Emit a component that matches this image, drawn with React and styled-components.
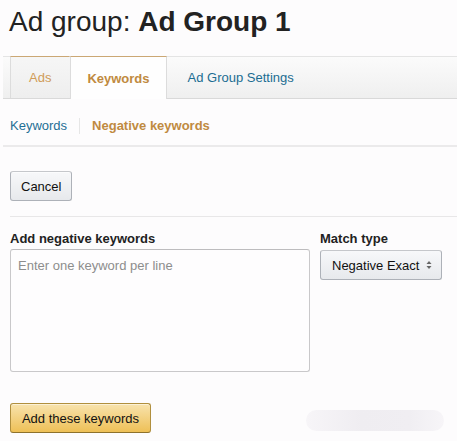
import React from "react";
import styled, { createGlobalStyle } from "styled-components";

const Global = createGlobalStyle`
  html, body { margin: 0; padding: 0; background: #fdfcfd; }
  body { font-family: "Liberation Sans", Arial, sans-serif; color: #111; }
  * { box-sizing: border-box; }
`;

const Page = styled.div`
  width: 457px;
  height: 441px;
  overflow: hidden;
`;

const Title = styled.h1`
  margin: 0;
  padding: 6px 0 0 9px;
  font-size: 28px;
  line-height: 32px;
  font-weight: 400;
  color: #222;
  white-space: nowrap;
  b { font-weight: 700; }
`;

const NavArea = styled.div`
  margin: 18px 0 0 3px;
`;

const TabBar = styled.div`
  display: flex;
  height: 43px;
  padding-left: 7px;
  border-top: 1px solid #e4e4e4;
  border-bottom: 1px solid #d9d9d9;
  background: linear-gradient(#fbfbfb, #efefef);
`;

const Tab = styled.div`
  display: flex;
  align-items: center;
  margin-top: -1px;
  padding: 0 ${(p) => (p.$plain ? "20px" : p.$active ? "16px" : "18px")};
  font-size: 13px;
  white-space: nowrap;
  border-top: 1px solid ${(p) => (p.$plain ? "transparent" : "#cba774")};
  border-left: 1px solid ${(p) => (p.$plain ? "transparent" : "#dcdcdc")};
  color: ${(p) => (p.$active ? "#c08a40" : p.$plain ? "#1b6d92" : "#d09c58")};
  font-weight: ${(p) => (p.$active ? 700 : 400)};
  background: ${(p) =>
    p.$active ? "#fefefe" : p.$plain ? "transparent" : "linear-gradient(#f6f6f6, #eeeeee)"};
  margin-bottom: ${(p) => (p.$active ? "-1px" : "0")};
  border-right: 1px solid ${(p) => (p.$active ? "#dcdcdc" : "transparent")};
`;

const SubNav = styled.div`
  display: flex;
  align-items: center;
  padding: 19px 0 11px 7px;
  border-bottom: 2px solid #ebeaeb;
  font-size: 13px;
  line-height: 16px;
`;

const SubLink = styled.span`
  color: ${(p) => (p.$active ? "#c08a40" : "#1f6f95")};
  font-weight: ${(p) => (p.$active ? 700 : 400)};
  padding: 0 12px;
  border-left: ${(p) => (p.$sep ? "1px solid #e6e6e6" : "none")};
  &:first-child { padding-left: 0; }
`;

const Body = styled.div`
  padding-left: 10px;
`;

const GrayButton = styled.button`
  display: block;
  margin-top: 24px;
  height: 30px;
  padding: 0 10px;
  font: 13px "Liberation Sans", Arial, sans-serif;
  color: #111;
  background: linear-gradient(#f7f8fa, #e7e9ec);
  border: 1px solid #adb1b8;
  border-top-color: #c5c7cb;
  border-radius: 3px;
  box-shadow: 0 1px 0 rgba(255, 255, 255, 0.6) inset;
`;

const Rule = styled.div`
  margin-top: 15px;
  border-top: 1px solid #e8e7e8;
`;

const Form = styled.div`
  display: grid;
  grid-template-columns: 300px 122px;
  column-gap: 10px;
  margin-top: 14px;
`;

const Field = styled.div`
  display: flex;
  flex-direction: column;
`;

const Label = styled.label`
  font-size: 13px;
  line-height: 16px;
  font-weight: 700;
  color: #222;
  margin-bottom: 2px;
`;

const TextArea = styled.textarea`
  width: 300px;
  height: 123px;
  resize: none;
  padding: 8px 7px;
  font: 13px "Liberation Sans", Arial, sans-serif;
  background: #fefdfe;
  border: 1px solid #c9c8ca;
  border-top-color: #bdbcbe;
  border-radius: 3px;
  &::placeholder { color: #8d8d8d; }
`;

const Select = styled.div`
  display: flex;
  align-items: center;
  justify-content: space-between;
  height: 30px;
  margin-top: 1px;
  padding: 0 9px 0 11px;
  font-size: 13px;
  color: #111;
  background: linear-gradient(#f7f8fa, #e7e9ec);
  border: 1px solid #adb1b8;
  border-top-color: #c5c7cb;
  border-radius: 3px;
  white-space: nowrap;
`;

const BottomRow = styled.div`
  display: flex;
  align-items: center;
  justify-content: space-between;
  margin-top: 31px;
  padding-right: 13px;
`;

const PrimaryButton = styled.button`
  height: 30px;
  width: 141px;
  padding: 0;
  font: 13px "Liberation Sans", Arial, sans-serif;
  color: #111;
  background: linear-gradient(#f8e3ad, #eec057);
  border: 1px solid #b08f3e;
  border-bottom-color: #8e722c;
  border-radius: 3px;
  box-shadow: 0 1px 0 rgba(255, 255, 255, 0.5) inset;
`;

const Smudge = styled.div`
  width: 138px;
  height: 21px;
  margin-top: 5px;
  border-radius: 11px;
  background: linear-gradient(90deg, #f7f5f8, #efedf1 40%, #f0eef2 75%, #f7f5f8);
`;

const Arrows = () => (
  <svg width="6" height="10" viewBox="0 0 6 10" aria-hidden="true">
    <path d="M3 1 L5.5 4 H0.5 Z" fill="#666" />
    <path d="M3 9 L5.5 6 H0.5 Z" fill="#666" />
  </svg>
);

export default function App() {
  return (
    <Page>
      <Global />
      <Title>
        Ad group: <b>Ad Group 1</b>
      </Title>
      <NavArea>
        <TabBar>
          <Tab>Ads</Tab>
          <Tab $active>Keywords</Tab>
          <Tab $plain>Ad Group Settings</Tab>
        </TabBar>
        <SubNav>
          <SubLink>Keywords</SubLink>
          <SubLink $sep $active>
            Negative keywords
          </SubLink>
        </SubNav>
      </NavArea>
      <Body>
        <GrayButton>Cancel</GrayButton>
        <Rule />
        <Form>
          <Field>
            <Label>Add negative keywords</Label>
            <TextArea placeholder="Enter one keyword per line" />
          </Field>
          <Field>
            <Label>Match type</Label>
            <Select>
              <span>Negative Exact</span>
              <Arrows />
            </Select>
          </Field>
        </Form>
        <BottomRow>
          <PrimaryButton>Add these keywords</PrimaryButton>
          <Smudge />
        </BottomRow>
      </Body>
    </Page>
  );
}
